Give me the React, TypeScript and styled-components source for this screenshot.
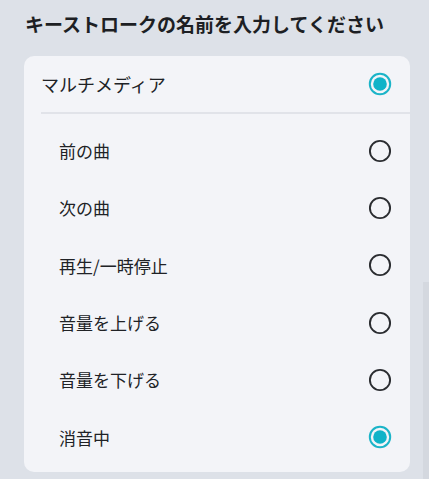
import React from 'react';
import styled, { createGlobalStyle } from 'styled-components';

const GlobalStyle = createGlobalStyle`
  html, body {
    margin: 0;
    padding: 0;
    background: #dde1e8;
  }
  body {
    font-family: 'Noto Sans CJK JP', 'Noto Sans', sans-serif;
  }
`;

const Page = styled.div`
  width: 429px;
  height: 479px;
  box-sizing: border-box;
  padding: 11px 19px 0 24px;
  position: relative;
  overflow: hidden;
`;

const Title = styled.h1`
  margin: 0 0 19px 1px;
  font-size: 19px;
  font-weight: 700;
  line-height: 26px;
  color: #1d1f24;
  white-space: nowrap;
`;

const Card = styled.div`
  background: #f3f4f8;
  border-radius: 10px;
  padding-bottom: 6px;
`;

const Header = styled.div`
  display: flex;
  align-items: center;
  justify-content: space-between;
  height: 56px;
  padding: 0 18px 0 0;
  margin-left: 17px;
  border-bottom: 2px solid #e1e3e9;
`;

const HeaderLabel = styled.span`
  font-size: 18px;
  color: #202226;
`;

const List = styled.div`
  display: flex;
  flex-direction: column;
  padding-top: 8px;
`;

const Row = styled.div`
  display: flex;
  align-items: center;
  justify-content: space-between;
  height: 57.3px;
  padding: 0 18px 0 35px;
`;

const RowLabel = styled.span`
  font-size: 17px;
  color: #202226;
`;

const ScrollTrack = styled.div`
  position: absolute;
  right: 0;
  top: 282px;
  bottom: 0;
  width: 6px;
  background: #d4d8df;
`;

const Radio: React.FC<{ checked?: boolean }> = ({ checked }) =>
  checked ? (
    <svg width="24" height="24" viewBox="0 0 24 24">
      <circle cx="12" cy="12" r="10.2" fill="none" stroke="#1bb4c8" strokeWidth="2" />
      <circle cx="12" cy="12" r="6.8" fill="#0fb3c8" />
    </svg>
  ) : (
    <svg width="24" height="24" viewBox="0 0 24 24">
      <circle cx="12" cy="12" r="10.1" fill="none" stroke="#2a2c30" strokeWidth="1.9" />
    </svg>
  );

const items = [
  { label: '前の曲', checked: false },
  { label: '次の曲', checked: false },
  { label: '再生/一時停止', checked: false },
  { label: '音量を上げる', checked: false },
  { label: '音量を下げる', checked: false },
  { label: '消音中', checked: true },
];

export default function App() {
  return (
    <>
      <GlobalStyle />
      <Page>
        <Title>キーストロークの名前を入力してください</Title>
        <Card>
          <Header>
            <HeaderLabel>マルチメディア</HeaderLabel>
            <Radio checked />
          </Header>
          <List>
            {items.map((it) => (
              <Row key={it.label}>
                <RowLabel>{it.label}</RowLabel>
                <Radio checked={it.checked} />
              </Row>
            ))}
          </List>
        </Card>
        <ScrollTrack />
      </Page>
    </>
  );
}
